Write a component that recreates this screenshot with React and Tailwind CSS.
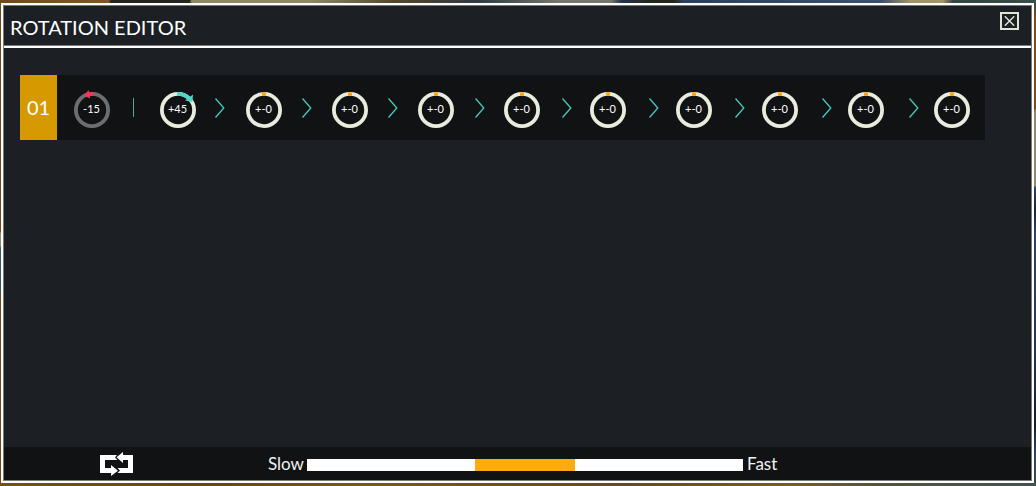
const STEPS = [
  { label: '-15', kind: 'start' },
  { label: '+45', kind: 'turn' },
  ...Array.from({ length: 9 }, () => ({ label: '+-0', kind: 'idle' })),
];

function Dial({ label, kind }) {
  return (
    <button type="button" className="relative grid size-9 shrink-0 place-items-center text-[11px] leading-none text-white">
      <svg viewBox="0 0 36 36" className="absolute inset-0 size-9 overflow-visible" fill="none" aria-hidden="true">
        <circle cx="18" cy="18" r="16.1" stroke={kind === 'start' ? '#6d6e70' : '#e8ecdc'} strokeWidth="3.8" />
        {kind === 'idle' && <rect x="16" y="0.2" width="4" height="3.8" rx="1" fill="#ffa60d" />}
        {kind === 'start' && (
          <>
            <path d="M19.5 1.9Q16 1.7 13.5 2.4" stroke="#f5365a" strokeWidth="3.8" />
            <path d="M10 3.4L14.6 -2L16.2 6.6Z" fill="#f5365a" />
          </>
        )}
        {kind === 'turn' && (
          <>
            <path d="M17 1.9A16.1 16.1 0 0 1 29 6.4" stroke="#4fd6c8" strokeWidth="3.8" />
            <path d="M33 2.6L32.4 10L25 8.4Z" fill="#4fd6c8" />
          </>
        )}
      </svg>
      <span className="relative pr-px pb-1">{label}</span>
    </button>
  );
}

function Chevron() {
  return (
    <svg viewBox="0 0 10 20" className="h-5 w-2.5 shrink-0" fill="none" stroke="#45c9ba" strokeWidth="1.3" aria-hidden="true">
      <path d="M0.5 0.5L8.8 10L0.5 19.5" />
    </svg>
  );
}

function LoopIcon() {
  return (
    <svg viewBox="0 0 33 24" className="h-6 w-[33px]" fill="#ffffff" aria-hidden="true">
      <path d="M0 3H17L15 5.5L17.5 8H5V16H11V13L18 18.7L11 24V21H0Z" />
      <path d="M16.5 5.2L23 0V3H33V21H17.5L20 18.5L17.5 16H28V8H23V11Z" />
    </svg>
  );
}

export default function App() {
  return (
    <div className="flex min-h-screen flex-col bg-[#1b2523] font-['Lato','Liberation_Sans',sans-serif]">
      <div className="h-[3px] bg-[linear-gradient(90deg,#6f4c1c_0%,#80571f_10.5%,#25241f_10.7%,#25241f_18.3%,#8b8966_18.5%,#8b8966_30%,#54472c_38%,#303a42_46%,#77766a_54%,#77766a_59%,#25324a_60%,#252519_63%,#252519_65%,#2c3f60_66%,#3a506c_85%,#a39665_88%,#a39665_91%,#334540_92%,#364f48_100%)]" />
      <div className="flex flex-1">
        <div className="w-px bg-[linear-gradient(180deg,#6f4717_0%,#6f4717_47.5%,#8e8b68_48%,#8e8b68_50.5%,#3c5963_51%,#344f55_60%,#6f4717_61%,#6f4717_100%)]" />
        <main className="flex min-w-0 flex-1 border-2 border-white">
          <div className="flex min-w-0 flex-1 flex-col border border-[#77797b] bg-[#1c1f24]">
            <header className="flex h-[42px] shrink-0 items-start justify-between border-b-2 border-white pr-3 pl-[6px] shadow-[inset_0_-1px_0_#77797b]">
              <h1 className="pt-2 text-[20px] leading-[26px] text-white">ROTATION EDITOR</h1>
              <button type="button" aria-label="Close" className="mt-[6px] grid h-[18px] w-[19px] place-items-center border-2 border-[#dfe6d6]">
                <svg viewBox="0 0 11 10" className="h-2.5 w-[11px]" stroke="#e8ecdc" strokeWidth="1.4" aria-hidden="true">
                  <path d="M0.8 0.3L10.2 9.7M10.2 0.3L0.8 9.7" />
                </svg>
              </button>
            </header>

            <section className="flex-1 pt-[27px] pr-[46px] pl-4">
              <div className="flex h-[65px] bg-[#111214]">
                <div className="grid w-[37px] shrink-0 place-items-center bg-[#d69a00] pb-0.5 text-[20px] text-white">01</div>
                <div className="grid min-w-0 flex-1 items-center">
                  <div className="col-start-1 row-start-1 flex items-center justify-between pt-[5px] pr-[15px] pl-[17px]">
                    {STEPS.map((step, i) => (
                      <Dial key={i} label={step.label} kind={step.kind} />
                    ))}
                  </div>
                  <div className="pointer-events-none col-start-1 row-start-1 flex items-center justify-between pr-[66px] pl-[71px]">
                    <div className="flex w-2.5 justify-center">
                      <div className="h-[19px] w-px bg-[#4fa99c]" />
                    </div>
                    {STEPS.slice(2).map((_, i) => (
                      <Chevron key={i} />
                    ))}
                  </div>
                </div>
              </div>
            </section>

            <footer className="flex h-[33px] shrink-0 items-center bg-[#111214] pl-24">
              <button type="button" aria-label="Loop" className="shrink-0">
                <LoopIcon />
              </button>
              <label htmlFor="speed" className="ml-[135px] w-[39px] shrink-0 text-[17px] leading-5 text-[#f1f1f1]">Slow</label>
              <input
                id="speed"
                type="range"
                min="0"
                max="100"
                defaultValue="50"
                className="mt-[3px] h-3 w-[436px] appearance-none bg-white [&::-webkit-slider-thumb]:h-3 [&::-webkit-slider-thumb]:w-[100px] [&::-webkit-slider-thumb]:appearance-none [&::-webkit-slider-thumb]:bg-[#ffab0d]"
              />
              <span className="ml-1 text-[17px] leading-5 text-[#f1f1f1]">Fast</span>
            </footer>
          </div>
        </main>
        <div className="w-0.5 bg-[linear-gradient(180deg,#344d46_0%,#7c4c14_3%,#7c4c14_22%,#8e8b68_22.5%,#8e8b68_38%,#29446b_38.5%,#182432_43%,#29446b_48%,#213a5b_70%,#151e2b_88%,#2b466b_94%,#3c4a3f_100%)]" />
      </div>
      <div className="h-[3px] bg-[linear-gradient(90deg,#73521f_0%,#654419_20%,#7a5624_35%,#684820_60%,#7a5a28_76%,#54543b_85%,#3f5450_100%)]" />
    </div>
  );
}
